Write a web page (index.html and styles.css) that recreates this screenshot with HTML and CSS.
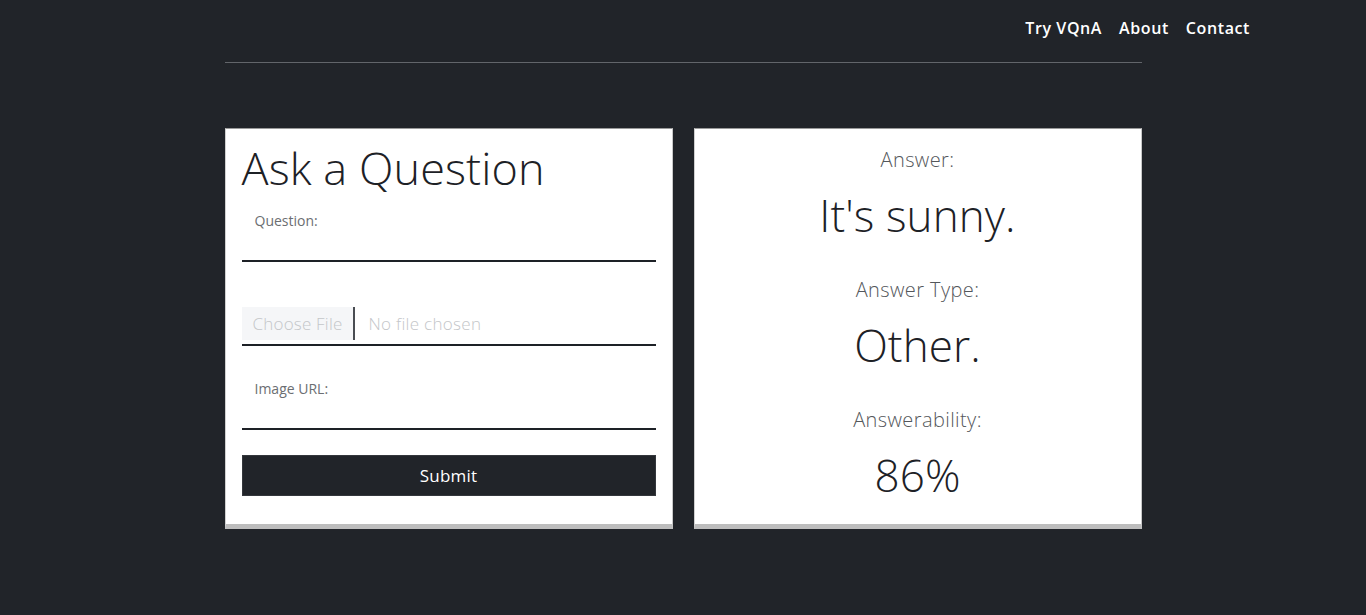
FILE: index.html
```html
<!DOCTYPE html>
<html lang="en">
<head>
<meta charset="utf-8">
<title>VQnA</title>
<link rel="stylesheet" href="styles.css">
</head>
<body>
<header class="topbar">
  <nav class="nav">
    <a class="nav-link" href="#">Try VQnA</a>
    <a class="nav-link" href="#">About</a>
    <a class="nav-link" href="#">Contact</a>
  </nav>
</header>
<main class="container">
  <hr class="divider">
  <div class="cards">
    <section class="card form-card">
      <h1 class="title">Ask a Question</h1>
      <div class="field">
        <label class="field-label">Question:</label>
        <div class="field-line"></div>
      </div>
      <div class="file-field">
        <span class="file-btn">Choose File</span>
        <span class="file-name">No file chosen</span>
      </div>
      <div class="field field-url">
        <label class="field-label">Image URL:</label>
        <div class="field-line"></div>
      </div>
      <button class="submit" type="button">Submit</button>
    </section>
    <section class="card answer-card">
      <div class="ans-label">Answer:</div>
      <div class="ans-value">It's sunny.</div>
      <div class="ans-label">Answer Type:</div>
      <div class="ans-value">Other.</div>
      <div class="ans-label">Answerability:</div>
      <div class="ans-value">86%</div>
    </section>
  </div>
</main>
</body>
</html>
```
FILE: styles.css
```css
* { box-sizing: border-box; }
html, body { margin: 0; padding: 0; }
body {
  background: #212429;
  font-family: "Open Sans", "Noto Sans", sans-serif;
  color: #212529;
  height: 615px;
  overflow: hidden;
}
.topbar {
  display: flex;
  justify-content: flex-end;
  padding: 17px 116px 0 0;
  height: 41px;
}
.nav { display: flex; gap: 17px; }
.nav-link {
  color: #fff;
  text-decoration: none;
  font-size: 16px;
  font-weight: 600;
  letter-spacing: 0.6px;
  line-height: 22px;
}
.container {
  width: 917px;
  margin: 0 auto;
}
.divider {
  margin: 21px 0 0 0;
  border: 0;
  border-top: 1px solid #62656a;
  height: 0;
}
.cards {
  display: grid;
  grid-template-columns: 448px 448px;
  gap: 21px;
  margin-top: 65px;
}
.card {
  background: #fff;
  border-top: 1px solid #9a9a9a;
  border-left: 1px solid #d0d0d0;
  border-right: 1px solid #c8c8c8;
  border-bottom: 5px solid #bdbdbd;
  height: 401px;
}
.form-card { padding: 11px 16px 0 16px; }
.title {
  margin: 0;
  font-size: 45px;
  font-weight: 300;
  line-height: 56px;
  color: #1d2126;
  letter-spacing: 0.1px;
}
.field { padding-top: 16px; }
.field-label {
  display: block;
  padding-left: 13px;
  font-size: 14px;
  font-weight: 400;
  color: #6b6e72;
  line-height: 18px;
}
.field-line {
  margin-top: 30px;
  border-bottom: 2px solid #1d2126;
}
.file-field {
  margin-top: 45px;
  display: flex;
  align-items: center;
  border-bottom: 2px solid #1d2126;
  padding-bottom: 4px;
  height: 39px;
}
.file-btn {
  background: #f5f6f8;
  color: #c4c6c9;
  font-size: 17px;
  font-weight: 300;
  height: 33px;
  line-height: 33px;
  padding: 0 11px 0 11px;
  border-right: 2px solid #4a4d52;
  letter-spacing: 0.2px;
}
.file-name {
  padding-left: 13px;
  color: #c4c6c9;
  font-size: 17px;
  font-weight: 300;
  letter-spacing: 0.3px;
}
.field-url { padding-top: 34px; }
.field-url .field-line { margin-top: 30px; }
.submit {
  display: block;
  width: 100%;
  margin-top: 25px;
  height: 41px;
  background: #212429;
  color: #fff;
  border: 1px solid #34373c;
  font-family: inherit;
  font-size: 17px;
  font-weight: 500;
  letter-spacing: 0.2px;
}
.answer-card {
  display: flex;
  flex-direction: column;
  align-items: center;
  padding-top: 18px;
}
.ans-label {
  font-size: 20px;
  font-weight: 300;
  color: #54575b;
  line-height: 26px;
  letter-spacing: 0.4px;
}
.ans-value {
  font-size: 44px;
  font-weight: 300;
  color: #1d2126;
  line-height: 56px;
  margin-top: 14px;
  margin-bottom: 34px;
  letter-spacing: 0.1px;
}
.ans-value:last-child { margin-bottom: 0; }
```
